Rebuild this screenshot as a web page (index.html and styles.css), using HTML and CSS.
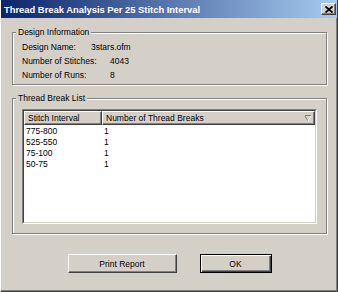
FILE: index.html
```html
<!DOCTYPE html>
<html>
<head>
  <title>Thread Break Analysis</title>
  <link rel="stylesheet" href="styles.css">
</head>
<body>
  <div class="window">
    <div class="titlebar">
      <span class="title">Thread Break Analysis Per 25 Stitch Interval</span>
      <button class="close-button" title="Close">
        <svg width="8" height="7" viewBox="0 0 8 7">
          <path d="M0.5 0.5 L7.5 6.5 M7.5 0.5 L0.5 6.5" stroke="#000" stroke-width="1.8" fill="none"/>
        </svg>
      </button>
    </div>

    <div class="dialog-body">
      <fieldset class="group group-info">
        <legend>Design Information</legend>
        <div class="info-row">
          <span class="info-label">Design Name:</span>
          <span>3stars.ofm</span>
        </div>
        <div class="info-row">
          <span class="info-label wide">Number of Stitches:</span>
          <span>4043</span>
        </div>
        <div class="info-row">
          <span class="info-label wide">Number of Runs:</span>
          <span>8</span>
        </div>
      </fieldset>

      <fieldset class="group group-list">
        <legend>Thread Break List</legend>
        <div class="listview">
          <div class="list-frame">
            <div class="list-header">
              <div class="col-head col-interval">Stitch Interval</div>
              <div class="col-head col-breaks">
                <span>Number of Thread Breaks</span>
                <svg class="sort-arrow" width="8" height="7" viewBox="0 0 8 7">
                  <path d="M1 1 L4 6" stroke="#808080" stroke-width="1" fill="none"/>
                  <path d="M1 0.5 L7 0.5" stroke="#808080" stroke-width="1" fill="none"/>
                  <path d="M7 1 L4 6" stroke="#ffffff" stroke-width="1" fill="none"/>
                </svg>
              </div>
            </div>
            <div class="list-rows">
              <div class="list-row"><span class="cell-interval">775-800</span><span>1</span></div>
              <div class="list-row"><span class="cell-interval">525-550</span><span>1</span></div>
              <div class="list-row"><span class="cell-interval">75-100</span><span>1</span></div>
              <div class="list-row"><span class="cell-interval">50-75</span><span>1</span></div>
            </div>
          </div>
        </div>
      </fieldset>

      <div class="button-container">
        <button class="btn btn-print">Print Report</button>
        <button class="btn btn-default">OK</button>
      </div>
    </div>
  </div>
</body>
</html>
```

FILE: styles.css
```css
/* dialog window */
body {
  margin: 0;
  font-family: "Liberation Sans", Arial, sans-serif;
  font-size: 8.5px;
  color: #000;
  background-color: #d4d0c8;
}

.window {
  width: 338px;
  height: 292px;
  box-sizing: border-box;
  background-color: #d4d0c8;
  border-left: 1px solid #ffffff;
  border-right: 1px solid #404040;
  border-bottom: 1px solid #404040;
  box-shadow: inset -1px -1px 0 #808080;
}

.titlebar {
  height: 18px;
  display: flex;
  align-items: center;
  justify-content: space-between;
  padding: 0 1px 0 3px;
  background: linear-gradient(to right, #0a246a, #a6caf0);
}

.title {
  color: #fff;
  font-weight: bold;
  font-size: 9.4px;
  white-space: nowrap;
}

.close-button {
  width: 15px;
  height: 12px;
  padding: 0;
  display: flex;
  align-items: center;
  justify-content: center;
  background-color: #d4d0c8;
  border: 1px solid;
  border-color: #fff #404040 #404040 #fff;
  box-shadow: inset -1px -1px 0 #808080;
  box-sizing: border-box;
}

.dialog-body {
  padding: 8px 10px 0 11px;
}

/* group boxes */
.group {
  margin: 0;
  min-width: 0;
  border: 1px solid #808080;
  box-shadow: inset 1px 1px 0 #fff, 1px 1px 0 #fff;
}

.group legend {
  padding: 0 2px;
  margin-left: -6px;
  line-height: 12px;
  background-color: #d4d0c8;
}

.group-info {
  padding: 2px 9px 2px 9px;
}

.info-row {
  display: flex;
  height: 14px;
  line-height: 14px;
}

.info-label {
  width: 69px;
}

.info-label.wide {
  width: 88px;
}

.group-list {
  margin-top: 7px;
  padding: 5px 9px 9px 9px;
}

/* list view */
.listview {
  width: 295px;
  height: 115px;
  box-sizing: border-box;
  border: 1px solid;
  border-color: #808080 #fff #fff #808080;
}

.list-frame {
  height: 100%;
  box-sizing: border-box;
  border: 1px solid;
  border-color: #404040 #d4d0c8 #d4d0c8 #404040;
  background-color: #fff;
}

.list-header {
  display: flex;
  height: 14px;
}

.col-head {
  box-sizing: border-box;
  height: 14px;
  line-height: 12px;
  padding-left: 3px;
  background-color: #d4d0c8;
  border: 1px solid;
  border-color: #fff #404040 #404040 #fff;
  box-shadow: inset -1px -1px 0 #808080;
  white-space: nowrap;
}

.col-interval {
  width: 78px;
}

.col-breaks {
  flex: 1;
  display: flex;
  align-items: center;
  justify-content: space-between;
  padding-right: 2px;
}

.list-rows {
  padding-top: 1px;
}

.list-row {
  display: flex;
  height: 11px;
  line-height: 11px;
  padding-left: 2px;
}

.cell-interval {
  width: 78px;
}

/* buttons */
.button-container {
  display: flex;
  justify-content: center;
  gap: 23px;
  margin-top: 20px;
}

.btn {
  height: 19px;
  padding: 0;
  font-family: "Liberation Sans", Arial, sans-serif;
  font-size: 8.5px;
  color: #000;
  background-color: #d4d0c8;
  box-sizing: border-box;
}

.btn-print {
  width: 109px;
  border: 1px solid;
  border-color: #fff #404040 #404040 #fff;
  box-shadow: inset -1px -1px 0 #808080;
}

.btn-default {
  width: 72px;
  border: 1px solid #000;
  box-shadow: inset 1px 1px 0 #fff, inset -1px -1px 0 #404040, inset -2px -2px 0 #808080;
}
```
